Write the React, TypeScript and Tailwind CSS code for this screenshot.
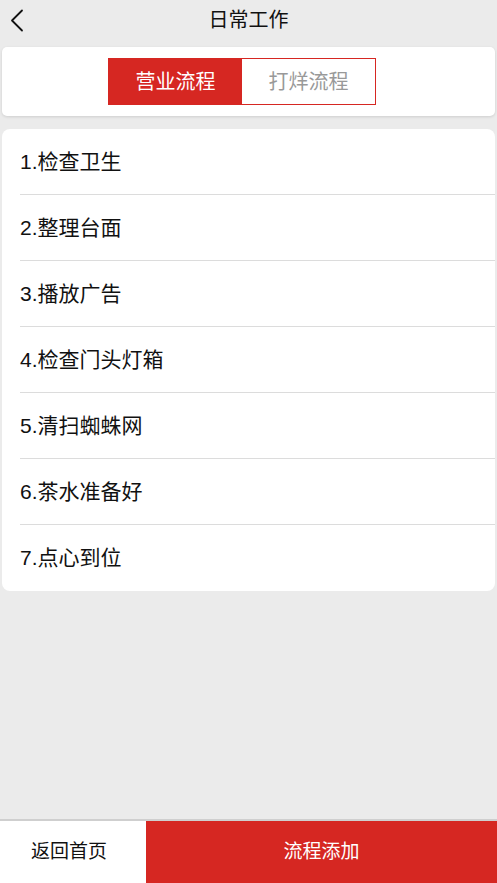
import { useState } from "react"

const steps = ["检查卫生", "整理台面", "播放广告", "检查门头灯箱", "清扫蜘蛛网", "茶水准备好", "点心到位"]

const font = { fontFamily: '"Liberation Sans", "Noto Sans CJK SC", sans-serif' }

export default function App() {
  const [tab, setTab] = useState(0)

  return (
    <div className="w-[497px] h-[883px] bg-[#ebebeb] flex flex-col overflow-hidden" style={font}>
      {/* Header */}
      <div className="h-[41px] flex items-center relative shrink-0">
        <button className="absolute left-[9px] top-[9px] w-[18px] h-[24px]">
          <svg width="18" height="24" viewBox="0 0 18 24" fill="none">
            <path d="M13 1.5 L3 11.5 L13 21.5" stroke="#111" strokeWidth="1.8" strokeLinecap="round" strokeLinejoin="round" />
          </svg>
        </button>
        <div className="flex-1 text-center text-[20px] text-[#111] leading-none mt-[-2px]">日常工作</div>
      </div>

      {/* Tabs */}
      <div className="mx-[2px] mt-[6px] h-[69px] bg-white rounded-[5px] shadow-[0_1px_3px_rgba(0,0,0,0.12)] flex items-center shrink-0">
        <div className="ml-[106px] flex w-[268px] h-[47px] border border-[#d62722]">
          <button
            onClick={() => setTab(0)}
            className={`flex-1 text-[20px] ${tab === 0 ? "bg-[#d62722] text-white" : "bg-white text-[#999]"}`}
          >
            营业流程
          </button>
          <button
            onClick={() => setTab(1)}
            className={`flex-1 text-[20px] ${tab === 1 ? "bg-[#d62722] text-white" : "bg-white text-[#999]"}`}
          >
            打烊流程
          </button>
        </div>
      </div>

      {/* Steps list */}
      <div className="mx-[2px] mt-[13px] bg-white rounded-[8px] shrink-0">
        {steps.map((s, i) => (
          <div key={s} className="pl-[18px]">
            <div
              className={`h-[66px] flex items-center text-[21px] text-[#111] ${
                i < steps.length - 1 ? "border-b border-[#dcdcdc]" : ""
              }`}
            >
              {i + 1}.{s}
            </div>
          </div>
        ))}
      </div>

      <div className="flex-1" />

      {/* Bottom bar */}
      <div className="h-[64px] flex border-t-2 border-[#cfcfcf] shrink-0">
        <button className="w-[146px] bg-white text-[19px] text-[#111] pr-[8px]">返回首页</button>
        <button className="flex-1 bg-[#d62722] text-[19px] text-white">流程添加</button>
      </div>
    </div>
  )
}
